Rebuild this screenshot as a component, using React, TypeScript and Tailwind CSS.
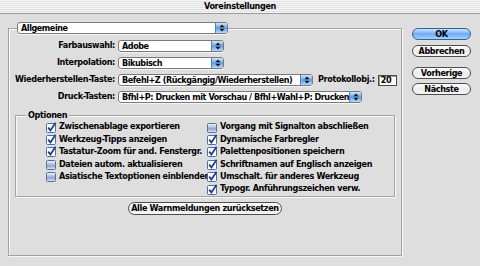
import React from 'react';

const Arrows = () => (
    <svg width="6" height="8" viewBox="0 0 6 8">
        <path d="M3 0.5 L5.5 3.2 L0.5 3.2 Z" fill="#111" />
        <path d="M3 7.5 L5.5 4.8 L0.5 4.8 Z" fill="#111" />
    </svg>
);

const Popup = ({ label, w }: { label: string; w: string }) => (
    <div className={`flex h-[12px] ${w} shrink-0 items-stretch rounded-[3px] border border-[#7a7a7a] bg-white shadow-[0_1px_0_#f4f4f4]`}>
        <span className="flex flex-1 items-center overflow-hidden whitespace-nowrap pl-[3px] leading-none tracking-[-0.45px]">{label}</span>
        <span className="flex w-[12px] items-center justify-center rounded-r-[2px] border-l border-[#5a7fb8] bg-gradient-to-b from-[#d4e8fd] via-[#5f9de8] to-[#b4d8fc]">
            <Arrows />
        </span>
    </div>
);

const Check = ({ on }: { on: boolean }) =>
    on ? (
        <svg width="11" height="11" viewBox="0 0 11 11" className="shrink-0">
            <rect x="0.5" y="1.5" width="9" height="9" rx="1" fill="#fff" stroke="#4a6fa8" />
            <path d="M2.2 5.6 L4.4 8.4 L9.6 0.8" fill="none" stroke="#1c3f8a" strokeWidth="1.8" />
        </svg>
    ) : (
        <svg width="11" height="11" viewBox="0 0 11 11" className="shrink-0">
            <defs>
                <linearGradient id="uc" x1="0" y1="0" x2="0" y2="1">
                    <stop offset="0" stopColor="#f2f6fc" />
                    <stop offset="0.45" stopColor="#a9bedf" />
                    <stop offset="0.6" stopColor="#8aa5d0" />
                    <stop offset="1" stopColor="#e6eefa" />
                </linearGradient>
            </defs>
            <rect x="0.5" y="1.5" width="9" height="9" rx="1" fill="url(#uc)" stroke="#5d6f90" />
        </svg>
    );

const Option = ({ on, text }: { on: boolean; text: string }) => (
    <div className="flex h-[12.4px] items-center gap-[2px] whitespace-nowrap">
        <Check on={on} />
        <span>{text}</span>
    </div>
);

const Pill = ({ label, primary }: { label: string; primary?: boolean }) => (
    <div
        className={
            primary
                ? 'flex h-[12px] w-[59px] items-center justify-center rounded-full border border-[#2f5f9e] bg-gradient-to-b from-[#cfe5fc] via-[#6eaaf0] to-[#a9d3fb] leading-none'
                : 'flex h-[12px] w-[59px] items-center justify-center rounded-full border border-[#4d4d4d] bg-gradient-to-b from-white via-[#ececec] to-[#f7f7f7] leading-none'
        }
    >
        {label}
    </div>
);

const Label = ({ text }: { text: string }) => (
    <span className="flex w-[106px] shrink-0 justify-end whitespace-nowrap">{text}</span>
);

const App = () => {
    return (
        <div className="h-[266px] w-[480px] overflow-hidden bg-[#dedede] font-['DejaVu_Sans_Condensed',sans-serif] text-[9px] font-bold tracking-[-0.35px] text-black">
            {/* title bar */}
            <div className="flex h-[14px] items-center justify-center border-b border-[#9c9c9c] bg-[repeating-linear-gradient(to_bottom,#f4f4f4_0px,#f4f4f4_1px,#e2e2e2_1px,#e2e2e2_2px)] leading-none">
                Voreinstellungen
            </div>

            <div className="flex">
                {/* main panel */}
                <div className="ml-[8px] mt-[14px] flex h-[228px] w-[394px] flex-col border border-[#a2a2a2] shadow-[inset_1px_1px_0_#f8f8f8,1px_1px_0_#f8f8f8]">
                    <div className="-mt-[7px] pl-[8px]">
                        <Popup label="Allgemeine" w="w-[211px]" />
                    </div>

                    <div className="mt-[6px] flex flex-col gap-[5px]">
                        <div className="flex h-[12px] items-center">
                            <Label text="Farbauswahl:" />
                            <div className="ml-[3px]">
                                <Popup label="Adobe" w="w-[106px]" />
                            </div>
                        </div>
                        <div className="flex h-[12px] items-center">
                            <Label text="Interpolation:" />
                            <div className="ml-[3px]">
                                <Popup label="Bikubisch" w="w-[106px]" />
                            </div>
                        </div>
                        <div className="flex h-[12px] items-center">
                            <Label text="Wiederherstellen-Taste:" />
                            <div className="ml-[3px]">
                                <Popup label="Befehl+Z (Rückgängig/Wiederherstellen)" w="w-[195px]" />
                            </div>
                            <span className="ml-[5px] whitespace-nowrap">Protokollobj.:</span>
                            <div className="ml-[3px] flex h-[11px] w-[19px] items-center border border-[#4a4a4a] bg-white pl-[2px] leading-none shadow-[inset_1px_1px_0_#9a9a9a]">
                                20
                            </div>
                        </div>
                        <div className="flex h-[12px] items-center">
                            <Label text="Druck-Tasten:" />
                            <div className="ml-[3px]">
                                <Popup label="Bfhl+P: Drucken mit Vorschau / Bfhl+Wahl+P: Drucken" w="w-[244px]" />
                            </div>
                        </div>
                    </div>

                    {/* Optionen group */}
                    <div className="mx-[6px] mt-[12px] border border-[#a2a2a2] pb-[1px] shadow-[inset_1px_1px_0_#f8f8f8,1px_1px_0_#f8f8f8]">
                        <div className="-mt-[7px] flex h-[12px] items-center">
                            <span className="ml-[10px] bg-[#dedede] px-[2px] leading-none">Optionen</span>
                        </div>
                        <div className="flex pl-[30px]">
                            <div className="flex w-[161px] flex-col">
                                <Option on text="Zwischenablage exportieren" />
                                <Option on text="Werkzeug-Tipps anzeigen" />
                                <Option on text="Tastatur-Zoom für and. Fenstergr." />
                                <Option on={false} text="Dateien autom. aktualisieren" />
                                <Option on={false} text="Asiatische Textoptionen einblenden" />
                            </div>
                            <div className="flex flex-col">
                                <Option on={false} text="Vorgang mit Signalton abschließen" />
                                <Option on text="Dynamische Farbregler" />
                                <Option on text="Palettenpositionen speichern" />
                                <Option on text="Schriftnamen auf Englisch anzeigen" />
                                <Option on text="Umschalt. für anderes Werkzeug" />
                                <Option on text="Typogr. Anführungszeichen verw." />
                            </div>
                        </div>
                    </div>

                    <div className="mx-auto mt-[5px] flex h-[13px] w-[154px] items-center justify-center whitespace-nowrap rounded-full border border-[#4d4d4d] bg-gradient-to-b from-white via-[#ececec] to-[#f7f7f7] leading-none">
                        Alle Warnmeldungen zurücksetzen
                    </div>
                </div>

                {/* buttons */}
                <div className="ml-[10px] mt-[14px] flex flex-col">
                    <Pill label="OK" primary />
                    <div className="mt-[5px]">
                        <Pill label="Abbrechen" />
                    </div>
                    <div className="mt-[10px]">
                        <Pill label="Vorherige" />
                    </div>
                    <div className="mt-[4px]">
                        <Pill label="Nächste" />
                    </div>
                </div>
            </div>
        </div>
    );
};

export default App;
